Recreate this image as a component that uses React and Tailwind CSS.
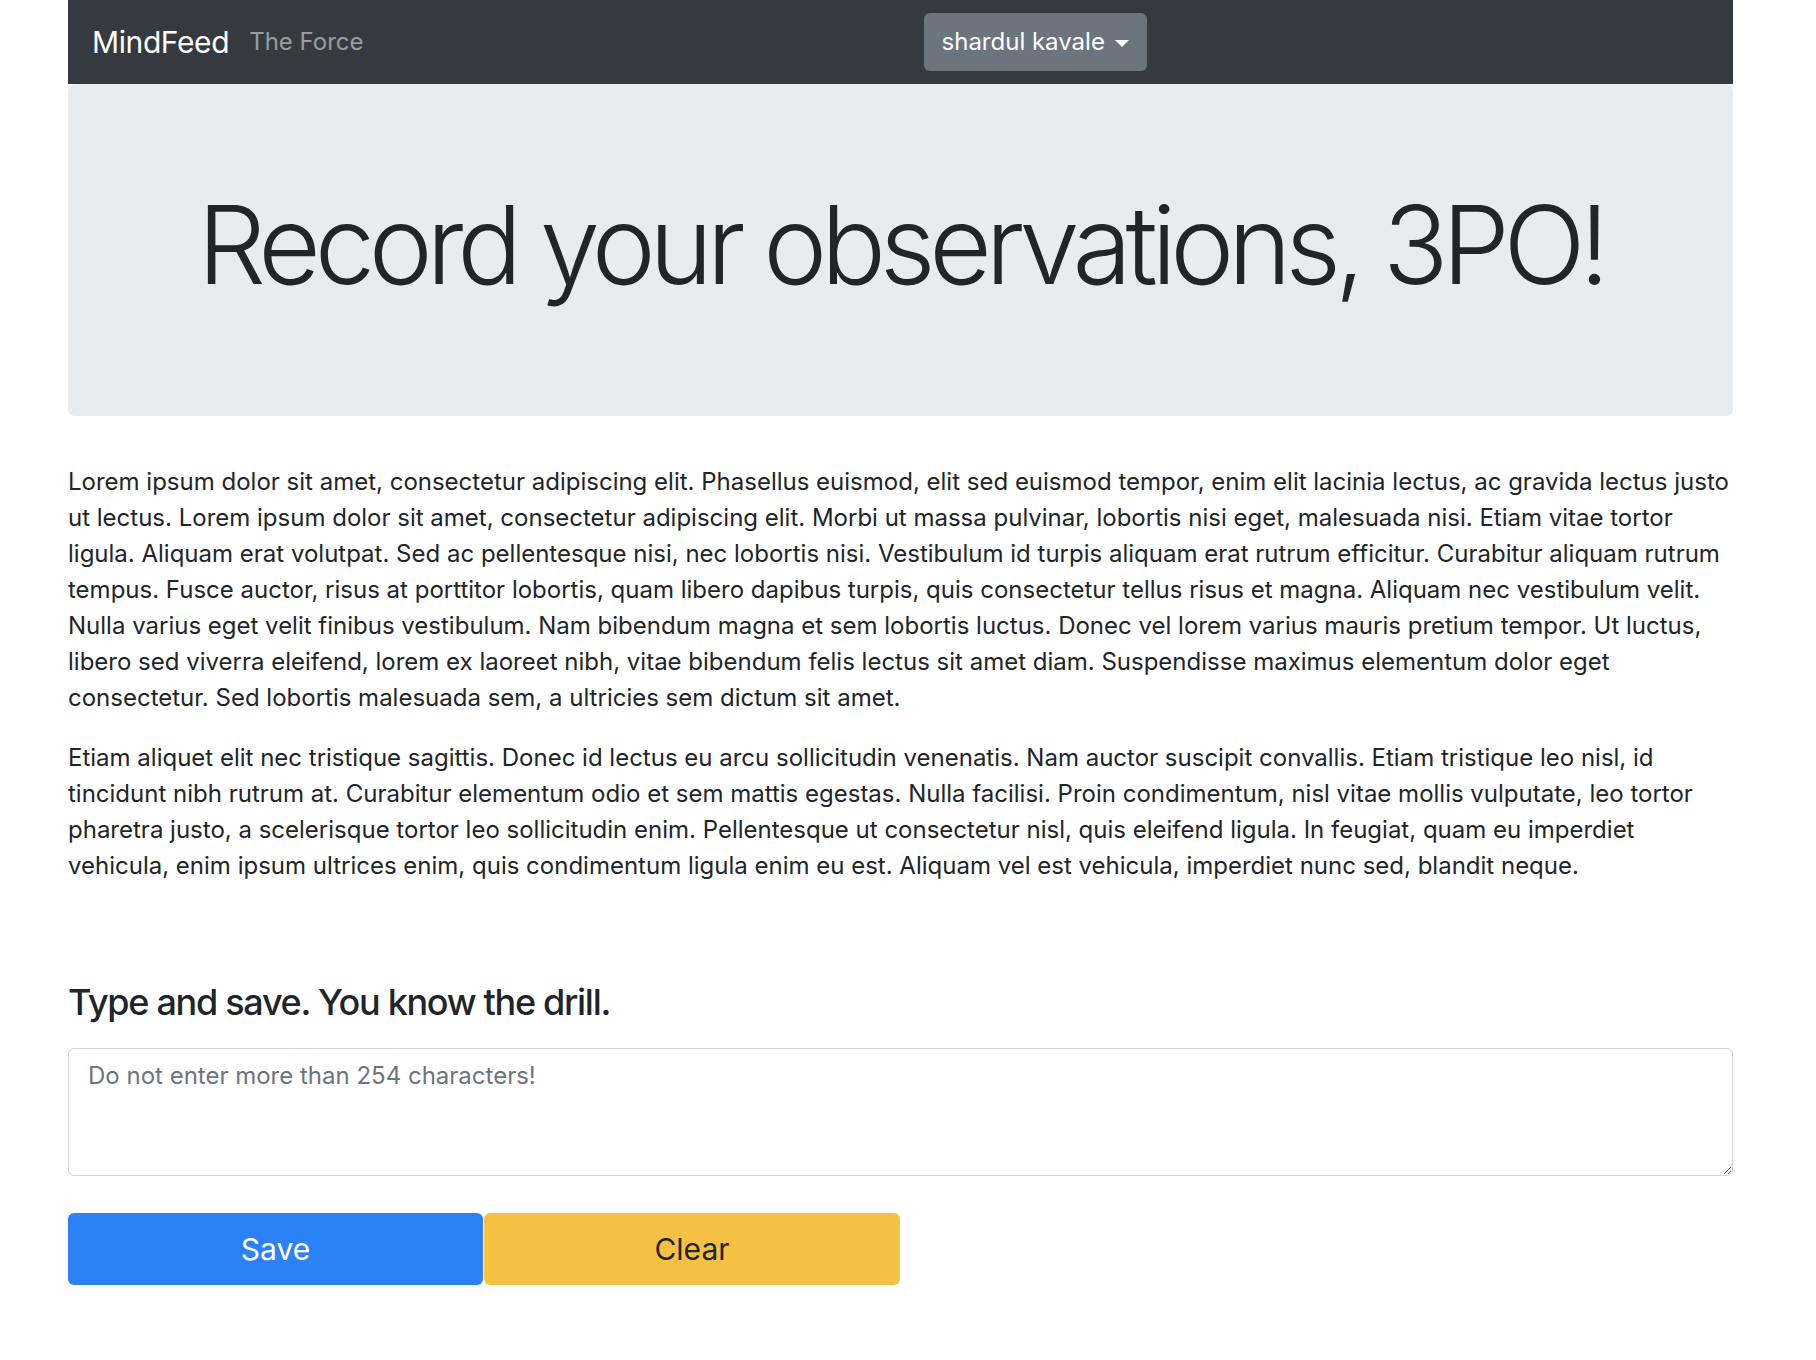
import React, { useState } from "react";

const lorem1 =
    "Lorem ipsum dolor sit amet, consectetur adipiscing elit. Phasellus euismod, elit sed euismod tempor, enim elit lacinia lectus, ac gravida lectus justo ut lectus. Lorem ipsum dolor sit amet, consectetur adipiscing elit. Morbi ut massa pulvinar, lobortis nisi eget, malesuada nisi. Etiam vitae tortor ligula. Aliquam erat volutpat. Sed ac pellentesque nisi, nec lobortis nisi. Vestibulum id turpis aliquam erat rutrum efficitur. Curabitur aliquam rutrum tempus. Fusce auctor, risus at porttitor lobortis, quam libero dapibus turpis, quis consectetur tellus risus et magna. Aliquam nec vestibulum velit. Nulla varius eget velit finibus vestibulum. Nam bibendum magna et sem lobortis luctus. Donec vel lorem varius mauris pretium tempor. Ut luctus, libero sed viverra eleifend, lorem ex laoreet nibh, vitae bibendum felis lectus sit amet diam. Suspendisse maximus elementum dolor eget consectetur. Sed lobortis malesuada sem, a ultricies sem dictum sit amet.";

const lorem2 =
    "Etiam aliquet elit nec tristique sagittis. Donec id lectus eu arcu sollicitudin venenatis. Nam auctor suscipit convallis. Etiam tristique leo nisl, id tincidunt nibh rutrum at. Curabitur elementum odio et sem mattis egestas. Nulla facilisi. Proin condimentum, nisl vitae mollis vulputate, leo tortor pharetra justo, a scelerisque tortor leo sollicitudin enim. Pellentesque ut consectetur nisl, quis eleifend ligula. In feugiat, quam eu imperdiet vehicula, enim ipsum ultrices enim, quis condimentum ligula enim eu est. Aliquam vel est vehicula, imperdiet nunc sed, blandit neque.";

export default function App() {
    const [note, setNote] = useState("");

    return (
        <div className="min-h-[1360px] bg-white font-['Inter','Liberation_Sans',sans-serif] text-[#212529]">
            <div className="ml-[68px] w-[1665px]">
                {/* navbar */}
                <nav className="flex h-[84px] items-center bg-[#343a40] px-6">
                    <span className="text-[30px] leading-[45px] tracking-[-0.4px] text-white">MindFeed</span>
                    <span className="ml-[20px] text-[24px] text-white/50">The Force</span>
                    <button className="ml-[560px] flex h-[58px] items-center gap-[10px] rounded-[6px] bg-[#6c757d] px-[18px] text-[24px] text-white">
                        shardul kavale
                        <span className="mt-[2px] h-0 w-0 border-x-[7px] border-t-[7px] border-x-transparent border-t-white" />
                    </button>
                </nav>

                {/* jumbotron */}
                <div className="rounded-[7px] bg-[#e9ecef] pt-[96px] pb-[106px] text-center">
                    <h1 className="text-[108px] font-light leading-[130px] tracking-[-6.3px]">
                        Record your observations, 3PO!
                    </h1>
                </div>

                <div className="mt-[48px] text-[24px] leading-[36px]">
                    <p className="mb-6">{lorem1}</p>
                    <p className="mb-6">{lorem2}</p>
                </div>

                <h4 className="mt-[97px] text-[36px] font-medium leading-[43px] tracking-[-1.3px]">
                    Type and save. You know the drill.
                </h4>

                <textarea
                    rows={3}
                    value={note}
                    onChange={(e) => setNote(e.target.value)}
                    placeholder="Do not enter more than 254 characters!"
                    className="mt-[24px] block h-[128px] w-full rounded-[6px] border-[1.5px] border-[#ced4da] px-[19px] py-[9px] text-[24px] leading-[36px] placeholder:text-[#6c757d] outline-none"
                />

                <div className="mt-[37px] flex gap-px">
                    <button className="h-[72px] w-[415px] rounded-[6px] bg-[#2b82f6] text-[30px] text-white">
                        Save
                    </button>
                    <button className="h-[72px] w-[416px] rounded-[6px] bg-[#f6c143] text-[30px] text-[#212529]">
                        Clear
                    </button>
                </div>
            </div>
        </div>
    );
}
